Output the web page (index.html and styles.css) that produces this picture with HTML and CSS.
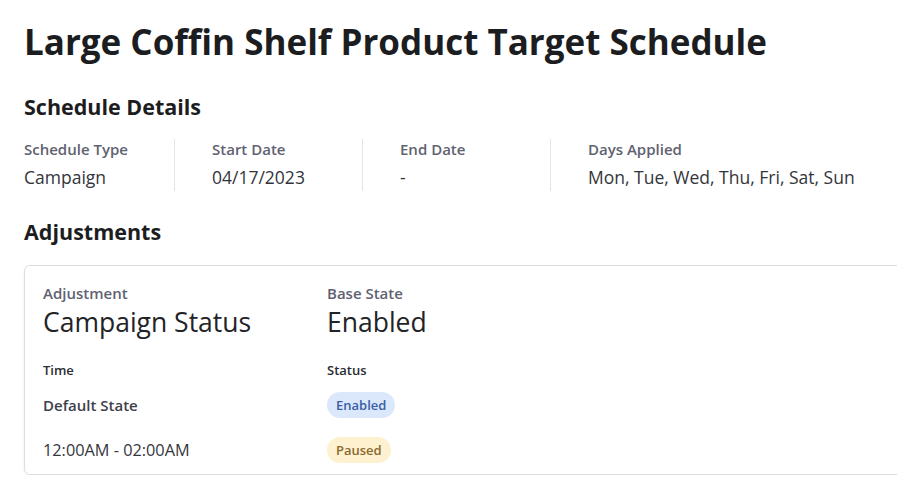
FILE: index.html
```html
<!DOCTYPE html>
<html lang="en">
<head>
  <meta charset="UTF-8">
  <title>Large Coffin Shelf Product Target Schedule</title>
  <link rel="stylesheet" href="styles.css">
</head>
<body>

<div class="page">
  <h1 class="title">Large Coffin Shelf Product Target Schedule</h1>

  <h2 class="section-title">Schedule Details</h2>
  <div class="details">
    <div class="detail">
      <div class="label">Schedule Type</div>
      <div class="value">Campaign</div>
    </div>
    <div class="detail">
      <div class="label">Start Date</div>
      <div class="value">04/17/2023</div>
    </div>
    <div class="detail">
      <div class="label">End Date</div>
      <div class="value">-</div>
    </div>
    <div class="detail last">
      <div class="label">Days Applied</div>
      <div class="value">Mon, Tue, Wed, Thu, Fri, Sat, Sun</div>
    </div>
  </div>

  <h2 class="section-title adj">Adjustments</h2>
  <div class="card">
    <div class="card-row head">
      <div>
        <div class="label">Adjustment</div>
        <div class="big">Campaign Status</div>
      </div>
      <div>
        <div class="label">Base State</div>
        <div class="big">Enabled</div>
      </div>
    </div>

    <div class="card-row cols">
      <div class="col-label">Time</div>
      <div class="col-label">Status</div>
    </div>
    <div class="card-row item">
      <div class="time strong">Default State</div>
      <div><span class="pill blue">Enabled</span></div>
    </div>
    <div class="card-row item">
      <div class="time">12:00AM - 02:00AM</div>
      <div><span class="pill yellow">Paused</span></div>
    </div>
  </div>
</div>

</body>
</html>
```

FILE: styles.css
```css
body {
  margin: 0;
  font-family: "Open Sans", Lato, sans-serif;
  background-color: #ffffff;
  color: #1c1d21;
  overflow: hidden;
}

.page {
  padding: 20px 0 0 24px;
}

.title {
  font-size: 35px;
  font-weight: 700;
  margin: 0;
  line-height: 44px;
}

.section-title {
  font-size: 21.5px;
  font-weight: 700;
  margin: 30px 0 0 0;
  line-height: 26px;
}

.section-title.adj {
  margin-top: 28px;
}

.details {
  display: flex;
  margin-top: 19px;
}

.detail {
  width: 150px;
  margin-right: 37px;
  border-right: 1px solid #e3e4e8;
  padding: 0 0 2px 0;
}

.detail.last {
  border-right: none;
  width: auto;
}

.label {
  font-size: 15px;
  font-weight: 600;
  color: #5f6270;
  line-height: 20px;
}

.value {
  font-size: 17.5px;
  color: #33353b;
  line-height: 24px;
  margin-top: 6px;
}

.card {
  margin-top: 20px;
  width: 900px;
  border: 1px solid #dcdde1;
  border-radius: 6px;
  box-shadow: 0 1px 3px rgba(0, 0, 0, 0.06);
  padding: 17px 0 2px 18px;
}

.card-row {
  display: grid;
  grid-template-columns: 284px 1fr;
}

.big {
  font-size: 26.5px;
  color: #222327;
  line-height: 32px;
  margin-top: 3px;
}

.cols {
  margin-top: 23px;
}

.col-label {
  font-size: 13px;
  font-weight: 600;
  color: #2a2c31;
  line-height: 18px;
}

.item {
  align-items: center;
  height: 45px;
}

.cols + .item {
  margin-top: 3px;
}

.time {
  font-size: 16.3px;
  color: #34363c;
}

.time.strong {
  font-size: 15px;
  font-weight: 600;
  color: #3e4049;
}

.pill {
  display: inline-block;
  font-size: 13px;
  font-weight: 600;
  line-height: 26px;
  padding: 0 9px;
  border-radius: 13px;
}

.pill.blue {
  background-color: #dbe8fc;
  color: #3a5ea6;
}

.pill.yellow {
  background-color: #fdf1cf;
  color: #8b6a2e;
}
```
